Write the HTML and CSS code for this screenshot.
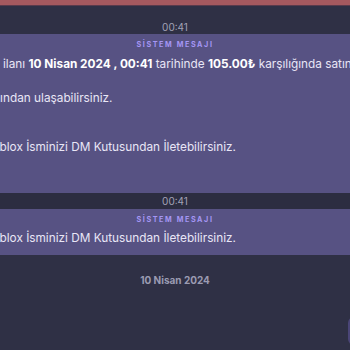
FILE: index.html
```html
<!DOCTYPE html>
<html lang="tr">
<head>
    <meta charset="UTF-8">
    <title>Mesajlar</title>
    <link rel="stylesheet" href="styles.css">
</head>
<body>
    <div class="topbar"></div>

    <div class="time">00:41</div>
    <div class="msg msg-big">
        <div class="msg-title">SİSTEM MESAJI</div>
        <div class="msg-body">
            <div class="line">Bu ilanı <b>10 Nisan 2024 , 00:41</b> tarihinde <b>105.00₺</b> karşılığında satın aldınız.</div>
            <div class="line gap">Anından ulaşabilirsiniz.</div>
            <div class="line gap2">Roblox İsminizi DM Kutusundan İletebilirsiniz.</div>
        </div>
    </div>

    <div class="time small">00:41</div>
    <div class="msg msg-small">
        <div class="msg-title">SİSTEM MESAJI</div>
        <div class="msg-body">
            <div class="line">Roblox İsminizi DM Kutusundan İletebilirsiniz.</div>
        </div>
    </div>

    <div class="date">10 Nisan 2024</div>
    <div class="row">
        <div class="bubble"></div>
    </div>
</body>
</html>
```

FILE: styles.css
```css
body{
    margin: 0;
    width: 350px;
    height: 350px;
    overflow: hidden;
    background-color: #2f3045;
    font-family: "Inter", "Liberation Sans", sans-serif;
    color: #e9e6f6;
}
.topbar{
    height: 5px;
    background-color: #a5595f;
    border-bottom: 1px solid #5a3b4c;
}
.time{
    height: 28px;
    line-height: 14px;
    display: flex;
    align-items: flex-end;
    justify-content: center;
    font-size: 10px;
    color: #a2a2b6;
}
.time.small{
    height: 16px;
    line-height: 16px;
    background-color: #2c2d41;
}
.msg{
    background-color: #575283;
}
.msg-title{
    text-align: center;
    font-size: 7.2px;
    font-weight: 700;
    letter-spacing: 1.6px;
    line-height: 12px;
    color: #a596f4;
    padding-top: 5px;
}
.msg-body{
    margin-left: -15px;
    width: 800px;
    font-size: 11.8px;
    white-space: nowrap;
}
.line{
    line-height: 17px;
}
.line b{
    font-weight: 700;
    color: #ffffff;
}
.msg-big .msg-body{
    padding-top: 5px;
    padding-bottom: 37px;
}
.msg-big .gap{
    margin-top: 17px;
}
.msg-big .gap2{
    margin-top: 32px;
}
.msg-small .msg-body{
    padding-top: 4px;
    padding-bottom: 8px;
}
.date{
    text-align: center;
    font-size: 10px;
    font-weight: 700;
    color: #9b9bb2;
    padding-top: 18px;
    line-height: 14px;
}
.row{
    display: flex;
    justify-content: flex-end;
    padding-top: 30px;
}
.bubble{
    width: 200px;
    height: 28px;
    margin-right: -198px;
    background-color: #4a4577;
    border-radius: 6px;
}
```
